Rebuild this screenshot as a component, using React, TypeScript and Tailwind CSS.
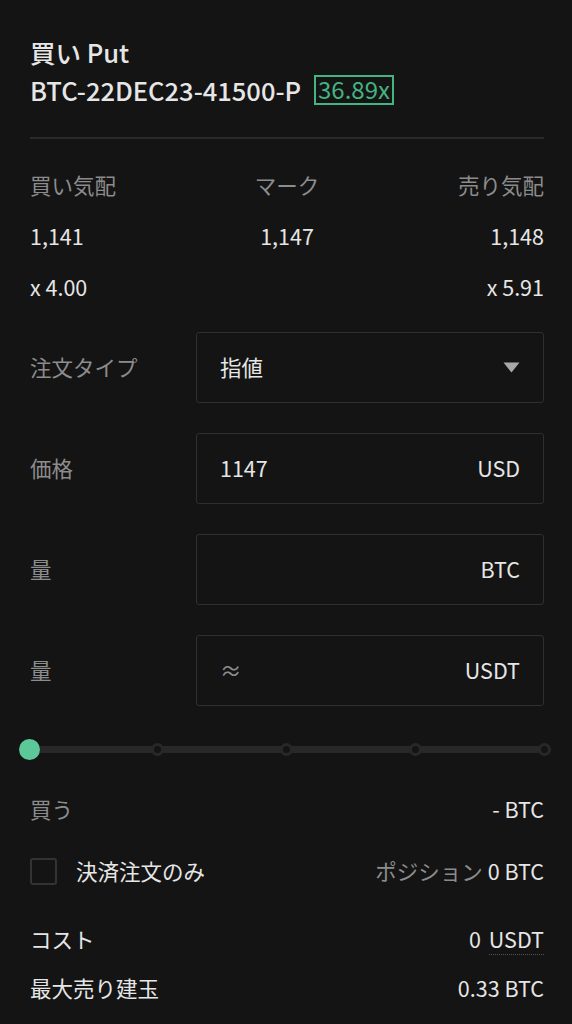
import React from "react";

const font = { fontFamily: '"Noto Sans CJK JP", "Noto Sans", sans-serif' };

function InputBox({ children }: { children: React.ReactNode }) {
  return (
    <div className="flex h-[71px] w-[348px] items-center justify-between rounded-[3px] border-[1.5px] border-[#2f2f2f] px-[23px]">
      {children}
    </div>
  );
}

function FormRow({ label, children }: { label: string; children: React.ReactNode }) {
  return (
    <div className="flex items-center justify-between">
      <span className="text-[21.5px] text-[#8c8c8c]">{label}</span>
      {children}
    </div>
  );
}

export default function App() {
  const nodes = [0, 1, 2, 3, 4];
  return (
    <div style={font} className="min-h-screen w-[572px] bg-[#141414] pl-[30px] pr-[28px] pt-[37px] text-[#e6e6e6]">
      <div className="flex flex-col gap-[8px]">
        <div className="text-[25.5px] font-medium leading-[30px]">買い Put</div>
        <div className="flex items-center gap-[13px] text-[25.5px] font-medium leading-[30px]">
          <span>BTC-22DEC23-41500-P</span>
          <span className="box-border flex h-[30px] items-center border-2 border-[#45b382] px-[2px] pb-[3px] text-[24px] font-normal leading-[22px] text-[#45b382]">
            36.89x
          </span>
        </div>
      </div>
      <div className="mt-[32px] h-[2px] bg-[#2a2a2a]" />

      <div className="mt-[32px] flex flex-col gap-[23px] text-[21.5px] leading-[28px]">
        <div className="grid grid-cols-3 text-[#8c8c8c]">
          <span>買い気配</span>
          <span className="text-center">マーク</span>
          <span className="text-right">売り気配</span>
        </div>
        <div className="grid grid-cols-3">
          <span>1,141</span>
          <span className="text-center">1,147</span>
          <span className="text-right">1,148</span>
        </div>
        <div className="grid grid-cols-3">
          <span>x 4.00</span>
          <span />
          <span className="text-right">x 5.91</span>
        </div>
      </div>

      <div className="mt-[31px] flex flex-col gap-[30px]">
        <FormRow label="注文タイプ">
          <InputBox>
            <span className="text-[21.5px]">指値</span>
            <svg width="17" height="11" viewBox="0 0 17 11">
              <polygon points="0.5,0.5 16.5,0.5 8.5,10.5" fill="#a8a8a8" />
            </svg>
          </InputBox>
        </FormRow>
        <FormRow label="価格">
          <InputBox>
            <span className="text-[21.5px]">1147</span>
            <span className="text-[21.5px]">USD</span>
          </InputBox>
        </FormRow>
        <FormRow label="量">
          <InputBox>
            <span />
            <span className="text-[21.5px]">BTC</span>
          </InputBox>
        </FormRow>
        <FormRow label="量">
          <InputBox>
            <span className="text-[21.5px] text-[#8c8c8c]">≈</span>
            <span className="text-[21.5px]">USDT</span>
          </InputBox>
        </FormRow>
      </div>

      <div className="relative ml-[-12px] mr-[-11px] mt-[32px] h-[22px]">
        <div className="absolute left-[11px] right-[11px] top-[8px] h-[7px] bg-[#282828]" />
        <div className="relative flex h-[22px] items-center justify-between">
          {nodes.map((n) => (
            <div key={n} className="flex w-[22px] justify-center">
              {n === 0 ? (
                <div className="h-[21px] w-[21px] rounded-full bg-[#5cc898]" />
              ) : (
                <div className="h-[13px] w-[13px] rounded-full border-[3.5px] border-[#282828] bg-[#141414]" />
              )}
            </div>
          ))}
        </div>
      </div>

      <div className="mt-[35px] flex flex-col text-[21.5px] leading-[28px]">
        <div className="flex justify-between">
          <span className="text-[#8c8c8c]">買う</span>
          <span>- BTC</span>
        </div>
        <div className="mt-[34px] flex items-center justify-between">
          <div className="flex items-center gap-[19px]">
            <div className="h-[27px] w-[27px] rounded-[3px] border-2 border-[#333333]" />
            <span>決済注文のみ</span>
          </div>
          <span>
            <span className="text-[#8c8c8c]">ポジション </span>0 BTC
          </span>
        </div>
        <div className="mt-[40px] flex justify-between">
          <span>コスト</span>
          <span>
            0<span className="ml-[8px] border-b border-dotted border-[#555555]">USDT</span>
          </span>
        </div>
        <div className="mt-[21px] flex justify-between">
          <span>最大売り建玉</span>
          <span>0.33 BTC</span>
        </div>
      </div>
    </div>
  );
}
